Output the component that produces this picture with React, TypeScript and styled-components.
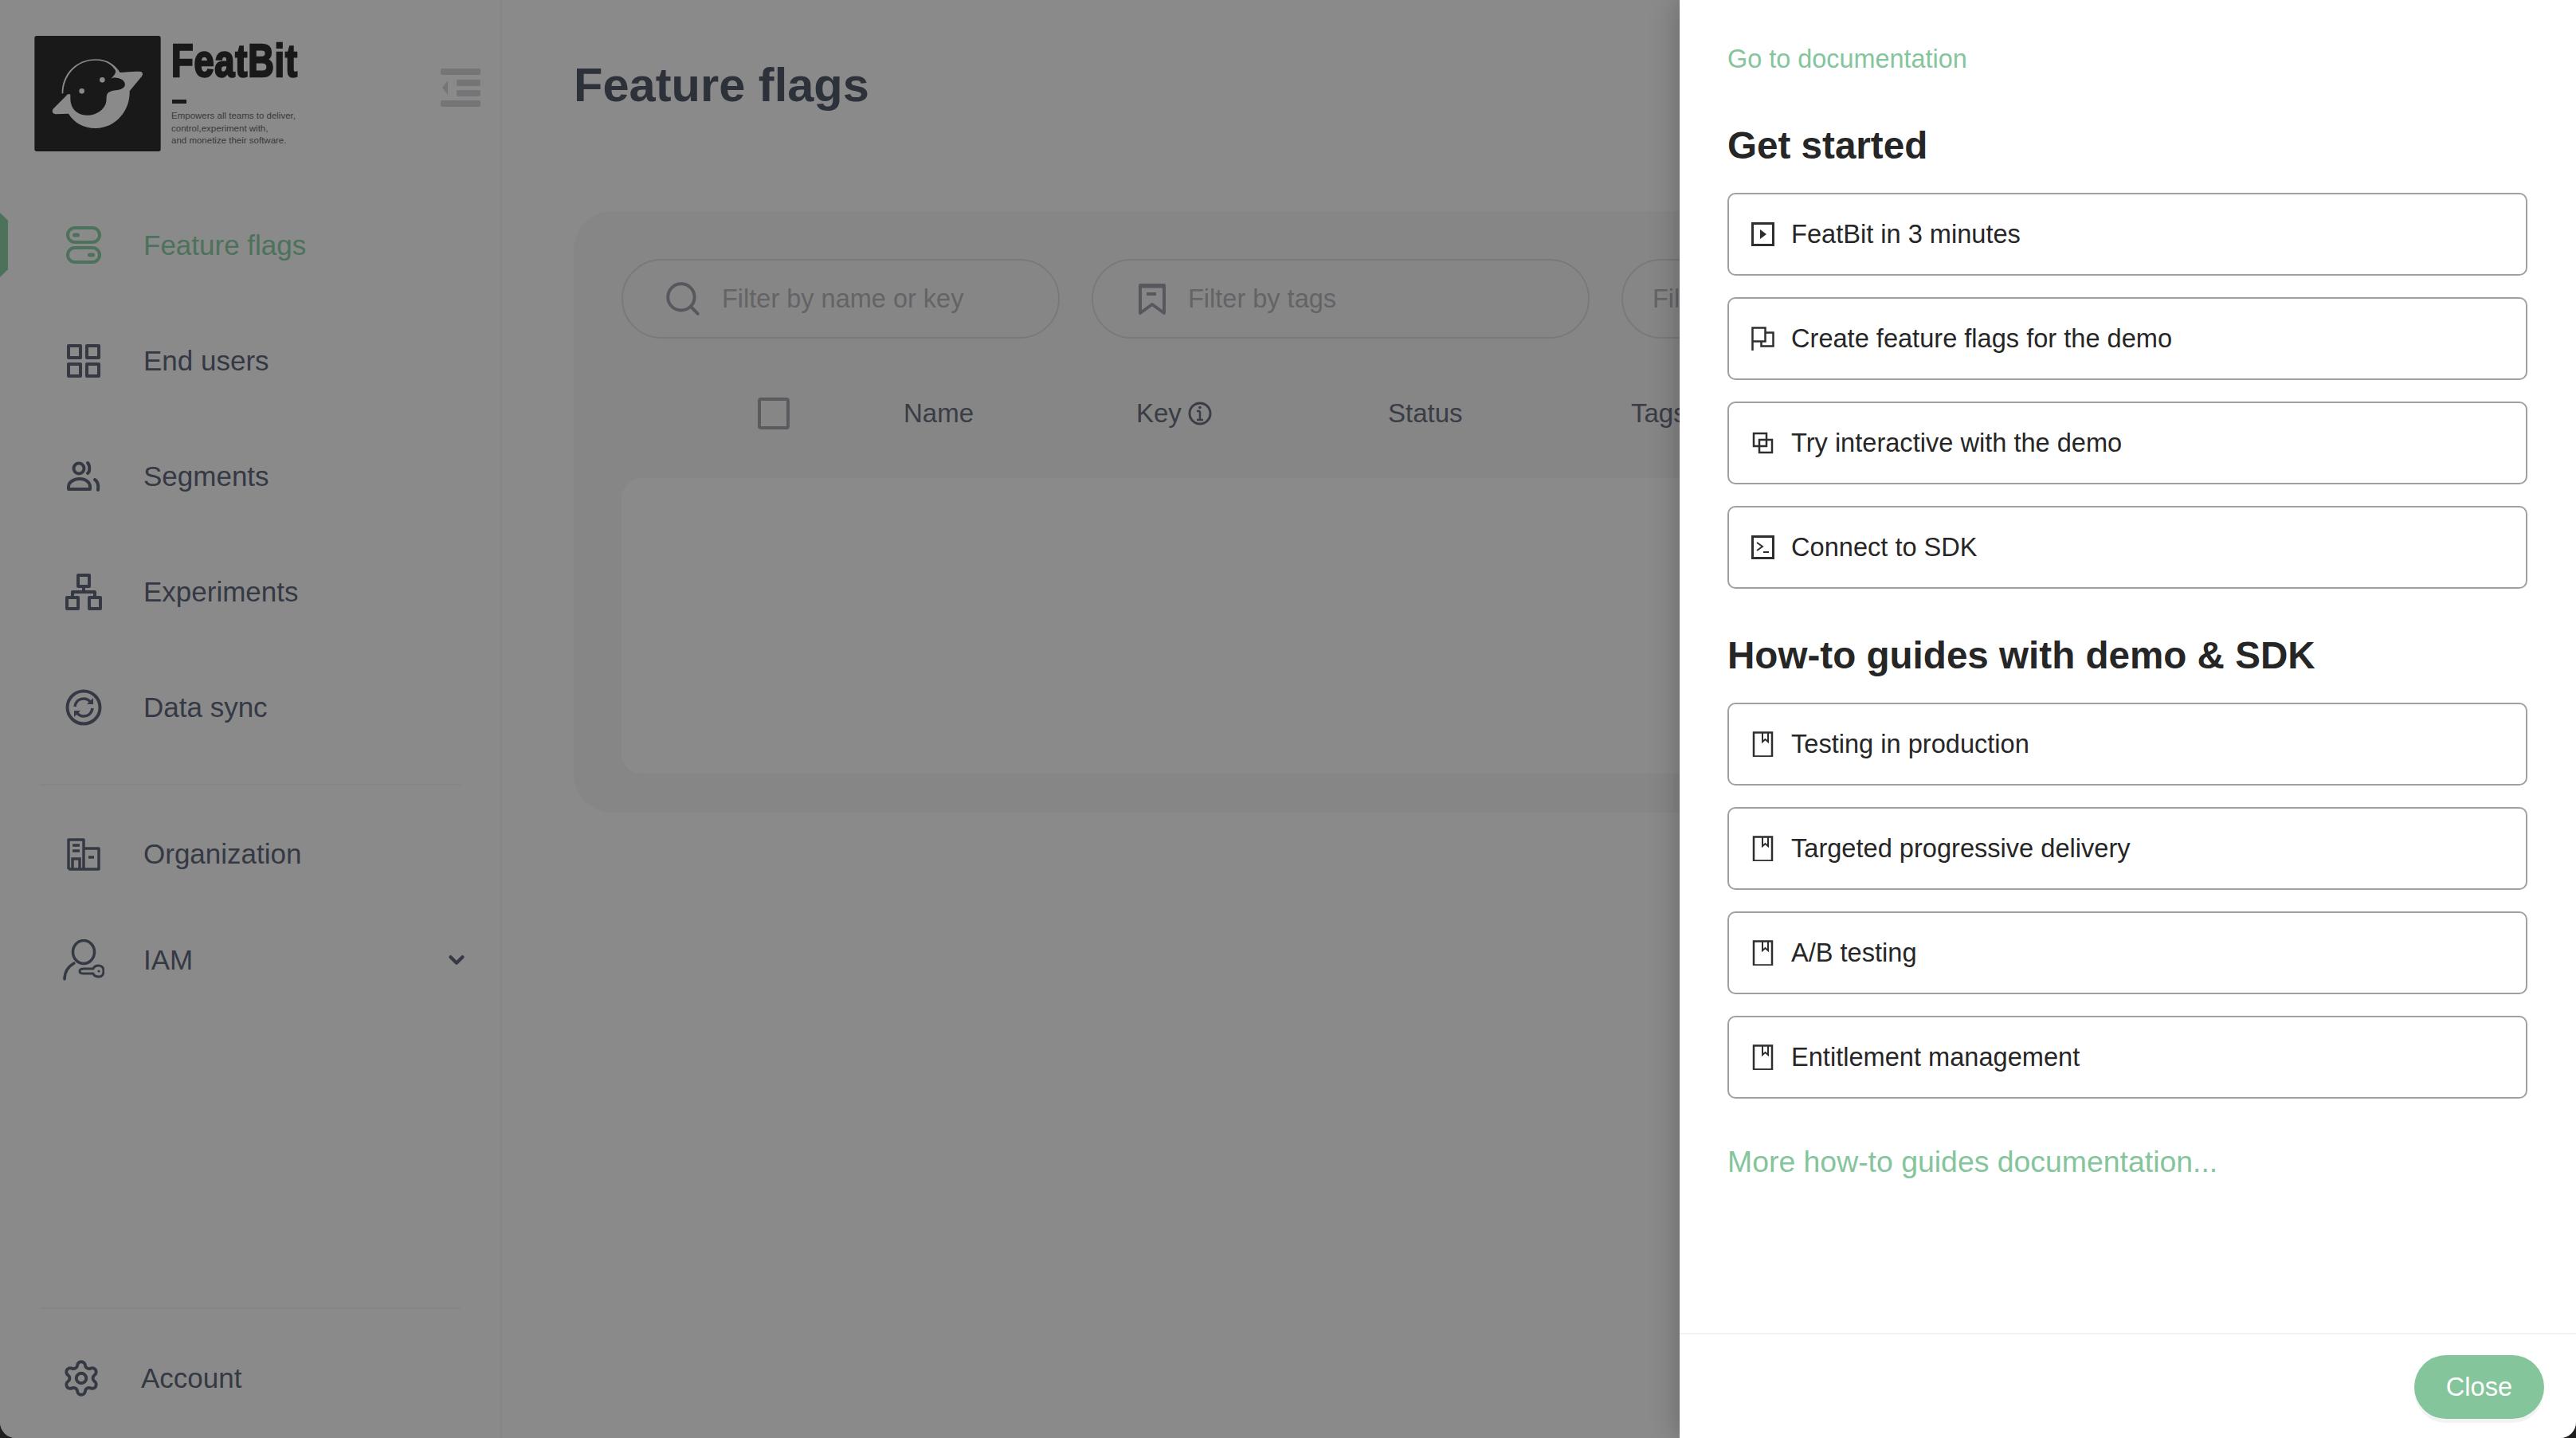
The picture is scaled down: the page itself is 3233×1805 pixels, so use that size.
import React from "react";
import styled, { createGlobalStyle } from "styled-components";
import { ChevronDown, Search, Settings } from "lucide-react";

const GlobalStyle = createGlobalStyle`
	html, body {
		margin: 0;
		padding: 0;
		background: #1f1f1f;
		font-family: "Liberation Sans", Arial, sans-serif;
	}
	* { box-sizing: border-box; }
`;

const navMain = [
	{ label: "Feature flags", icon: <FlagsIcon />, active: true },
	{ label: "End users", icon: <UsersGridIcon /> },
	{ label: "Segments", icon: <SegmentsIcon /> },
	{ label: "Experiments", icon: <ExperimentsIcon /> },
	{ label: "Data sync", icon: <SyncIcon /> },
];

const startLinks = [
	{ label: "FeatBit in 3 minutes", icon: <PlayIcon /> },
	{ label: "Create feature flags for the demo", icon: <DemoFlagIcon /> },
	{ label: "Try interactive with the demo", icon: <OverlapIcon /> },
	{ label: "Connect to SDK", icon: <TerminalIcon /> },
];

const guideLinks = ["Testing in production", "Targeted progressive delivery", "A/B testing", "Entitlement management"];

function FlagsIcon() {
	return (
		<svg width="46" height="47" viewBox="0 0 46 47" fill="none" stroke="currentColor" strokeWidth="4">
			<rect x="3" y="2" width="40" height="18" rx="9" />
			<rect x="3" y="27" width="40" height="18" rx="9" />
			<rect x="9" y="8.5" width="9" height="5" rx="2.5" fill="currentColor" stroke="none" />
			<rect x="28" y="33.5" width="9" height="5" rx="2.5" fill="currentColor" stroke="none" />
		</svg>
	);
}

function UsersGridIcon() {
	return (
		<svg width="46" height="42" viewBox="0 0 46 42" fill="none" stroke="currentColor" strokeWidth="4" strokeLinejoin="round">
			<rect x="4" y="2" width="15" height="15" />
			<rect x="27" y="2" width="15" height="15" />
			<rect x="4" y="25" width="15" height="15" />
			<rect x="27" y="25" width="15" height="15" />
		</svg>
	);
}

function SegmentsIcon() {
	return (
		<svg width="46" height="40" viewBox="0 0 46 40" fill="none" stroke="currentColor" strokeWidth="4" strokeLinecap="round">
			<circle cx="17" cy="10" r="6.5" />
			<path d="M28 3c3 3 3 11 0 13" />
			<path d="M4 36h27v-3c0-6-6-10-13-10S4 27 4 33z" strokeLinejoin="round" />
			<path d="M37 24c3 2 5 6 4 13" />
		</svg>
	);
}

function ExperimentsIcon() {
	return (
		<svg width="46" height="46" viewBox="0 0 46 46" fill="none" stroke="currentColor" strokeWidth="4" strokeLinejoin="round">
			<rect x="16" y="2" width="14" height="14" />
			<rect x="2" y="30" width="14" height="14" />
			<rect x="30" y="30" width="14" height="14" />
			<path d="M23 16v7M9 30v-7h28v7" />
		</svg>
	);
}

function SyncIcon() {
	return (
		<svg width="46" height="46" viewBox="0 0 46 46" fill="none" stroke="currentColor">
			<circle cx="23" cy="23" r="20.5" strokeWidth="4" />
			<path d="M12 22c1-7 6-10 11-10 4 0 7 2 9 5" strokeWidth="3.5" />
			<path d="M34 24c-1 7-6 10-11 10-4 0-7-2-9-5" strokeWidth="3.5" />
			<path d="M35 11v8h-8zM11 35v-8h8z" fill="currentColor" stroke="none" />
		</svg>
	);
}

function OrgIcon() {
	return (
		<svg width="46" height="42" viewBox="0 0 46 42" fill="none" stroke="currentColor" strokeWidth="3.5">
			<path d="M4 40V3h19v37M23 14h19v26H4" strokeLinejoin="round" />
			<path d="M9 10h9M9 17h9M29 25h7" />
			<path d="M9 40V27h9v13" />
		</svg>
	);
}

function IamIcon() {
	return (
		<svg width="52" height="52" viewBox="0 0 52 52" fill="none" stroke="currentColor" strokeWidth="3.5" strokeLinecap="round">
			<ellipse cx="26" cy="16" rx="13.5" ry="14.5" />
			<path d="M2 50c0-9 5-16 12-20" />
			<path d="M21 40c0-2 2-3 5-3h12c1-3 4-4 7-4 4 0 6 3 6 7s-2 7-6 7c-3 0-6-1-7-4H26c-3 0-5-1-5-3z" strokeWidth="3" strokeLinejoin="round" />
			<circle cx="45" cy="40" r="1.6" fill="currentColor" stroke="none" />
		</svg>
	);
}

function CollapseIcon() {
	return (
		<svg width="50" height="48" viewBox="0 0 50 48" fill="currentColor">
			<rect x="0" y="0" width="50" height="8" rx="2" />
			<rect x="20" y="14" width="30" height="8" rx="2" />
			<rect x="20" y="27" width="30" height="8" rx="2" />
			<rect x="0" y="40" width="50" height="8" rx="2" />
			<path d="M9 15v18L2 24z" />
		</svg>
	);
}

function TagFilterIcon() {
	return (
		<svg width="36" height="40" viewBox="0 0 36 40" fill="none" stroke="currentColor" strokeWidth="4">
			<path d="M3 38V3h30v35L18 27z" strokeLinejoin="round" />
			<path d="M2 4h32" strokeWidth="5" />
			<path d="M11 14h12" strokeWidth="4" />
		</svg>
	);
}

function InfoIcon() {
	return (
		<svg width="30" height="32" viewBox="0 0 30 32" fill="none" stroke="currentColor" strokeWidth="3">
			<circle cx="15" cy="16" r="13" />
			<path d="M15 13v10M11 24h8M11 13h4" strokeWidth="2.5" />
			<circle cx="15" cy="8.5" r="1.8" fill="currentColor" stroke="none" />
		</svg>
	);
}

function PlayIcon() {
	return (
		<svg width="29" height="30" viewBox="0 0 29 30" fill="none" stroke="currentColor" strokeWidth="3">
			<rect x="1.5" y="1.5" width="26" height="27" />
			<path d="M11 9v12l8-6z" fill="currentColor" stroke="none" />
		</svg>
	);
}

function DemoFlagIcon() {
	return (
		<svg width="29" height="30" viewBox="0 0 29 30" fill="none" stroke="currentColor" strokeWidth="2.5">
			<path d="M1.5 30V1.5h16v17H1.5" />
			<path d="M17.5 7.5h10v17h-15v-6" />
		</svg>
	);
}

function OverlapIcon() {
	return (
		<svg width="29" height="30" viewBox="0 0 29 30" fill="none" stroke="currentColor" strokeWidth="2.5">
			<rect x="3" y="3" width="16" height="16" />
			<rect x="10" y="11" width="16" height="16" />
		</svg>
	);
}

function TerminalIcon() {
	return (
		<svg width="29" height="30" viewBox="0 0 29 30" fill="none" stroke="currentColor" strokeWidth="3">
			<rect x="1.5" y="1.5" width="26" height="27" />
			<path d="m7 9 7 5-7 5" strokeWidth="2" />
			<path d="M15 21h7" strokeWidth="2" />
		</svg>
	);
}

function GuideIcon() {
	return (
		<svg width="29" height="32" viewBox="0 0 29 32" fill="none" stroke="currentColor" strokeWidth="2.5">
			<rect x="3" y="1.5" width="23" height="30" />
			<path d="M14 2v11l3.5-3 3.5 3V2" strokeWidth="2" />
		</svg>
	);
}

function LogoMark() {
	return (
		<svg width="159" height="145" viewBox="40 45 475 435">
			<rect x="40" y="45" width="475" height="435" rx="8" fill="#2e2e2e" />
			<path
				d="M143 262C143 190 195 133 270 133c50 0 75 25 92 50 25-2 60-6 78-3 8 2 9 10 4 17l-46 56c3 70-50 140-128 140-45 0-80-20-102-55l-48 2c-12-2-16-10-10-20l55-55c-3-4-25-3-25-3z"
				fill="#fbfbfb"
			/>
			<path
				d="M148 264c0-70 50-127 122-127 38 0 60 15 74 37 5 9-5 22-16 32 8-5 25-5 40 3 14 8 18 24 4 33-16 10-35 5-52 15-12 8-8 22-10 36-5 28-35 51-72 51-40 0-64-28-63-65 0-10 2-14-5-14l-22-1z"
				fill="#2e2e2e"
			/>
			<circle cx="218" cy="253" r="10" fill="#fbfbfb" />
			<circle cx="295" cy="211" r="10" fill="#fbfbfb" />
		</svg>
	);
}

export default function App() {
	return (
		<>
			<GlobalStyle />
			<Screen>
				<Sidebar>
					<Brand>
						<LogoMark />
						<BrandText>
							<BrandName>FeatBit</BrandName>
							<BrandDash />
							<BrandTagline>
								<span>Empowers all teams to deliver,</span>
								<span>control,experiment with,</span>
								<span>and monetize their software.</span>
							</BrandTagline>
						</BrandText>
						<Collapse>
							<CollapseIcon />
						</Collapse>
					</Brand>
					<NavList>
						{navMain.map((item) => (
							<NavItem key={item.label} $active={item.active}>
								<NavGlyph>{item.icon}</NavGlyph>
								{item.label}
							</NavItem>
						))}
					</NavList>
					<Divider />
					<SecondList>
						<NavItem>
							<NavGlyph>
								<OrgIcon />
							</NavGlyph>
							Organization
						</NavItem>
						<NavItem $height={122}>
							<NavGlyph>
								<IamIcon />
							</NavGlyph>
							IAM
							<Expand>
								<ChevronDown size={30} strokeWidth={3.4} />
							</Expand>
						</NavItem>
					</SecondList>
					<FooterNav>
						<AccountItem>
							<AccountGlyph>
								<Settings size={50} strokeWidth={1.9} />
							</AccountGlyph>
							Account
						</AccountItem>
					</FooterNav>
				</Sidebar>
				<Main>
					<PageTitle>Feature flags</PageTitle>
					<Card>
						<Filters>
							<FilterPill $width={550} $pad={50}>
								<FilterGlyph $gap={24}>
									<Search size={50} strokeWidth={1.9} />
								</FilterGlyph>
								Filter by name or key
							</FilterPill>
							<FilterPill $width={625} $pad={56}>
								<FilterGlyph $gap={27}>
									<TagFilterIcon />
								</FilterGlyph>
								Filter by tags
							</FilterPill>
							<FilterPill $width={500} $pad={37}>
								Filter by status
							</FilterPill>
						</Filters>
						<TableHead>
							<Checkbox />
							<HeadCell $width={292}>Name</HeadCell>
							<HeadCell $width={316}>
								Key
								<InfoWrap>
									<InfoIcon />
								</InfoWrap>
							</HeadCell>
							<HeadCell $width={305}>Status</HeadCell>
							<HeadCell $width={200}>Tags</HeadCell>
						</TableHead>
						<TableBody />
					</Card>
				</Main>
				<Mask />
				<Drawer>
					<DrawerBody>
						<TopLink>Go to documentation</TopLink>
						<SectionTitle $first>Get started</SectionTitle>
						<LinkStack>
							{startLinks.map((link) => (
								<LinkCard key={link.label}>
									<LinkGlyph>{link.icon}</LinkGlyph>
									{link.label}
								</LinkCard>
							))}
						</LinkStack>
						<SectionTitle>How-to guides with demo &amp; SDK</SectionTitle>
						<LinkStack>
							{guideLinks.map((label) => (
								<LinkCard key={label}>
									<LinkGlyph>
										<GuideIcon />
									</LinkGlyph>
									{label}
								</LinkCard>
							))}
						</LinkStack>
						<MoreLink>More how-to guides documentation...</MoreLink>
					</DrawerBody>
					<DrawerFooter>
						<CloseButton>Close</CloseButton>
					</DrawerFooter>
				</Drawer>
			</Screen>
		</>
	);
}

const Screen = styled.div`
	position: relative;
	display: flex;
	width: 3233px;
	height: 1805px;
	overflow: hidden;
	background: #fcfcfc;
	border-radius: 0 0 20px 20px;
`;

const Sidebar = styled.aside`
	display: flex;
	flex-direction: column;
	flex: 0 0 630px;
	border-right: 2px solid #f2f2f4;
`;

const Brand = styled.div`
	display: flex;
	height: 235px;
	padding: 45px 0 0 43px;
	position: relative;
`;

const BrandText = styled.div`
	display: flex;
	flex-direction: column;
	margin-left: 13px;
	width: 160px;
`;

const BrandName = styled.div`
	font-size: 58px;
	line-height: 46px;
	margin-top: 8px;
	font-weight: 700;
	color: #2e2e2e;
	-webkit-text-stroke: 2.5px #2e2e2e;
	transform: scaleX(0.78);
	transform-origin: left center;
	white-space: nowrap;
	letter-spacing: 1px;
`;

const BrandDash = styled.div`
	width: 18px;
	height: 5px;
	margin: 26px 0 0 1px;
	background: #2e2e2e;
`;

const BrandTagline = styled.div`
	display: flex;
	flex-direction: column;
	margin-top: 8px;
	font-size: 11.5px;
	line-height: 15.5px;
	color: #6a6a6a;
	white-space: nowrap;
`;

const Collapse = styled.div`
	position: absolute;
	left: 553px;
	top: 86px;
	color: #d6d6d9;
	line-height: 0;
`;

const NavList = styled.nav`
	display: flex;
	flex-direction: column;
`;

const SecondList = styled(NavList)`
	margin-top: 13px;
`;

const NavItem = styled.div<{ $active?: boolean; $height?: number }>`
	position: relative;
	display: flex;
	align-items: center;
	height: ${({ $height }) => $height ?? 145}px;
	padding-left: 76px;
	font-size: 35px;
	color: ${({ $active }) => ($active ? "#8ccfa7" : "#62697d")};

	${({ $active }) =>
		$active &&
		`
		&::before {
			content: "";
			position: absolute;
			left: 0;
			top: 32px;
			width: 10px;
			height: 81px;
			background: #8ccfa7;
			clip-path: polygon(0 0, 100% 12%, 100% 88%, 0 100%);
		}
	`}
`;

const NavGlyph = styled.span`
	display: flex;
	align-items: center;
	justify-content: center;
	width: 58px;
	margin-right: 46px;
	line-height: 0;
`;

const Expand = styled.span`
	position: absolute;
	left: 558px;
	top: 46px;
	line-height: 0;
	color: #62697d;
`;

const Divider = styled.div`
	height: 2px;
	margin: 24px 50px 0;
	background: #f2f2f4;
`;

const FooterNav = styled.div`
	margin: auto 50px 0;
	border-top: 2px solid #f2f2f4;
`;

const AccountItem = styled.div`
	display: flex;
	align-items: center;
	height: 162px;
	padding: 12px 0 0 27px;
	font-size: 35px;
	color: #62697d;
`;

const AccountGlyph = styled.span`
	display: flex;
	margin-right: 50px;
	line-height: 0;
`;

const Main = styled.main`
	flex: 1;
	min-width: 0;
	padding: 0 0 0 90px;
	overflow: hidden;
`;

const PageTitle = styled.h1`
	margin: 0;
	height: 265px;
	padding-top: 71px;
	font-size: 59.6px;
	line-height: 72px;
	font-weight: 700;
	color: #535a6b;
`;

const Card = styled.section`
	display: flex;
	flex-direction: column;
	width: 1700px;
	height: 755px;
	padding: 60px 0 0 60px;
	background: #f5f5f5;
	border-radius: 48px;
`;

const Filters = styled.div`
	display: flex;
	gap: 40px;
`;

const FilterPill = styled.div<{ $width: number; $pad: number }>`
	display: flex;
	flex: 0 0 ${({ $width }) => $width}px;
	align-items: center;
	height: 100px;
	padding-left: ${({ $pad }) => $pad}px;
	border: 2px solid #dcdcdc;
	border-radius: 50px;
	font-size: 32.5px;
	color: #b6b6ba;
`;

const FilterGlyph = styled.span<{ $gap: number }>`
	display: flex;
	margin-right: ${({ $gap }) => $gap}px;
	line-height: 0;
	color: #9ea1a9;
`;

const TableHead = styled.div`
	display: flex;
	align-items: center;
	height: 94px;
	margin-top: 47px;
	padding-left: 171px;
	font-size: 33px;
	color: #6a6f80;
`;

const Checkbox = styled.span`
	flex: 0 0 40px;
	height: 40px;
	margin-right: 143px;
	border: 4px solid #a4a7ae;
	border-radius: 4px;
`;

const HeadCell = styled.div<{ $width: number }>`
	display: flex;
	align-items: center;
	flex: 0 0 ${({ $width }) => $width}px;
`;

const InfoWrap = styled.span`
	display: flex;
	margin-left: 8px;
	line-height: 0;
`;

const TableBody = styled.div`
	width: 1600px;
	height: 371px;
	margin-top: 34px;
	background: #fcfcfc;
	border-radius: 26px;
`;

const Mask = styled.div`
	position: absolute;
	inset: 0;
	background: rgba(0, 0, 0, 0.45);
`;

const Drawer = styled.aside`
	position: absolute;
	top: 0;
	right: 0;
	bottom: 0;
	display: flex;
	flex-direction: column;
	width: 1125px;
	background: #fff;
	box-shadow: 0 0 34px rgba(0, 0, 0, 0.28);
`;

const DrawerBody = styled.div`
	flex: 1;
	padding: 51px 61px 0 60px;
`;

const TopLink = styled.div`
	font-size: 32.4px;
	line-height: 46px;
	color: #84c59c;
`;

const SectionTitle = styled.h2<{ $first?: boolean }>`
	margin: ${({ $first }) => ($first ? 53 : 51)}px 0 26px;
	font-size: 47.6px;
	line-height: 66px;
	font-weight: 700;
	color: #262626;
`;

const LinkStack = styled.div`
	display: flex;
	flex-direction: column;
	gap: 27px;
`;

const LinkCard = styled.div`
	display: flex;
	align-items: center;
	height: 104px;
	padding-left: 28px;
	border: 2px solid #a0a0a0;
	border-radius: 10px;
	font-size: 32.6px;
	color: #262626;
`;

const LinkGlyph = styled.span`
	display: flex;
	margin-right: 21px;
	line-height: 0;
	color: #2e2e2e;
`;

const MoreLink = styled.div`
	margin-top: 54px;
	font-size: 37.4px;
	line-height: 50px;
	color: #84c59c;
`;

const DrawerFooter = styled.div`
	display: flex;
	justify-content: flex-end;
	height: 132px;
	padding: 26px 40px 0 0;
	border-top: 2px solid #f2f2f2;
`;

const CloseButton = styled.button`
	width: 163px;
	height: 80px;
	border: 0;
	border-radius: 40px;
	background: #84c59c;
	box-shadow: 0 5px 0 #f3f3f3;
	font-family: inherit;
	font-size: 32.6px;
	color: #fff;
`;
